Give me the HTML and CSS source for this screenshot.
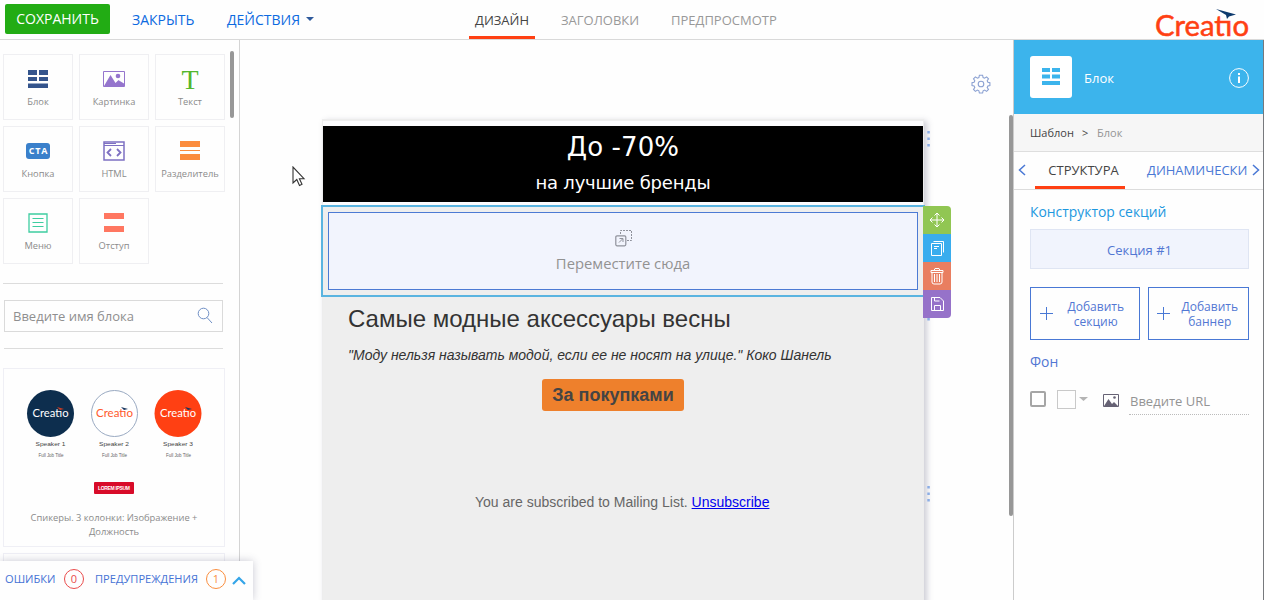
FILE: index.html
```html
<!DOCTYPE html>
<html lang="ru">
<head>
<meta charset="utf-8">
<title>Creatio</title>
<link rel="stylesheet" href="styles.css">
</head>
<body>
<div class="app">
  <header class="topbar">
    <button class="save"><span class="w83">СОХРАНИТЬ</span></button>
    <a class="action close">ЗАКРЫТЬ</a>
    <a class="action more">ДЕЙСТВИЯ</a>
    <svg class="caret" width="8" height="4"><path d="M0 0h8L4 4z" fill="#2f5a9c"/></svg>
    <nav class="modes">
      <a class="mode active">ДИЗАЙН</a>
      <a class="mode headings">ЗАГОЛОВКИ</a>
      <a class="mode preview">ПРЕДПРОСМОТР</a>
    </nav>
    <svg class="logo" width="96" height="32" viewBox="0 0 96 32">
      <text x="0" y="28" textLength="94" lengthAdjust="spacingAndGlyphs" class="logo-text">Creatıo</text>
      <path d="M61 1l20 5.500-7 2-2 2.500-1-4z" fill="#0d3a6e"/>
    </svg>
  </header>
  <div class="body">
    <aside class="palette">
      <div class="tiles">
        <div class="tile"><svg class="lower" width="20" height="18" fill="#34548c"><path d="M0 0h9v5H0zM11 0h9v5h-9zM0 7h9v4H0zM11 7h9v4h-9zM0 13.500h20V18H0z"/></svg><span>Блок</span></div>
        <div class="tile"><svg class="lower" width="22" height="18" fill="none"><path d="M.5 1.500h21v15H.5z" stroke="#9575cd"/><path d="M1 16L7.500 5l5 8 3-3 5 6z" fill="#9575cd"/><circle cx="15" cy="6" r="2.300" fill="#9575cd"/><path d="M16 10.500l5 3V16h-4z" fill="#9575cd"/></svg><span>Картинка</span></div>
        <div class="tile"><b class="letter">T</b><span>Текст</span></div>
        <div class="tile"><i class="cta">CTA</i><span>Кнопка</span></div>
        <div class="tile"><svg width="22" height="20" fill="none" stroke="#7e70c2"><path d="M1 1h20v18H1z" stroke-width="1.500"/><path d="M1 4.500h20M1 2.500h12" stroke-width="1.200"/><path d="M8 8l-3.500 3.500L8 15M14 8l3.500 3.500L14 15" stroke-width="1.800"/></svg><span>HTML</span></div>
        <div class="tile"><svg width="20" height="20" fill="#fb8c3e"><path d="M0 0h20v6H0zM0 9h20v1H0zM0 13h20v6H0z"/></svg><span>Разделитель</span></div>
        <div class="tile"><svg width="20" height="20" fill="none" stroke="#3ecda0"><path d="M1 1h18v18H1z" stroke-width="1.300"/><path d="M4.500 5.500h11M4.500 9.500h11M4.500 13.500h11"/></svg><span>Меню</span></div>
        <div class="tile"><svg width="20" height="20" fill="#ff7761"><path d="M0 0h20v6H0zM0 13h20v6H0z"/></svg><span>Отступ</span></div>
      </div>
      <div class="scroll-thumb"></div>
      <div class="search"><span>Введите имя блока</span>
        <svg width="16" height="17" fill="none" stroke="#6f8fc5"><circle cx="6.500" cy="6.500" r="5.300"/><path d="M10 10.500l5 5.500"/></svg>
      </div>
      <div class="block-card">
        <svg width="180" height="110" viewBox="0 0 180 110">
          <circle cx="27.500" cy="24.500" r="23.500" fill="#0d2e4e"/>
          <circle cx="91.500" cy="24.500" r="23" fill="#fff" stroke="#9aaac2"/>
          <circle cx="155" cy="24.500" r="23.500" fill="#ff4013"/>
          <g class="mini-logo">
            <text x="9.500" y="28" textLength="36" lengthAdjust="spacingAndGlyphs" fill="#fff">Creatıo</text>
            <text x="73" y="28" textLength="37" lengthAdjust="spacingAndGlyphs" fill="#ff5a2c">Creatıo</text>
            <text x="137" y="28" textLength="36" lengthAdjust="spacingAndGlyphs" fill="#fff">Creatıo</text>
          </g>
          <path d="M34 18l7 2-4 1z" fill="#cf3c21"/><path d="M98 18l7 2-4 1zM162 18l7 2-4 1z" fill="#17355d"/>
          <g class="name"><text x="12.500" y="57" textLength="30" lengthAdjust="spacingAndGlyphs">Speaker 1</text><text x="76" y="57" textLength="30" lengthAdjust="spacingAndGlyphs">Speaker 2</text><text x="140" y="57" textLength="30" lengthAdjust="spacingAndGlyphs">Speaker 3</text></g>
          <g class="job"><text x="15.500" y="67.500" textLength="25">Full Job Title</text><text x="79" y="67.500" textLength="25">Full Job Title</text><text x="143" y="67.500" textLength="25">Full Job Title</text></g>
          <rect x="71" y="93" width="40" height="12" rx="1" fill="#d80b29"/>
          <text x="75" y="101" textLength="32" class="lorem">LOREM IPSUM</text>
        </svg>
        <p>Спикеры. 3 колонки: Изображение +<br>Должность</p>
      </div>
      <div class="next-card"></div>
    </aside>

    <main class="stage">
      <svg class="gear" width="20" height="20" viewBox="0 0 20 20" fill="none" stroke="#8ba1d2" stroke-width="1.100"><circle cx="10" cy="10" r="2.800"/><path d="M8.400 1.200h3.200l.5 2.300 1.500.7 2-1.300 1.900 1.900-1.300 2 .7 1.500 2 .5v2.700l-2 .5-.7 1.500 1.300 2-1.900 1.900-2-1.300-1.500.7-.5 2.200H8.400l-.5-2.200-1.500-.7-2 1.300-1.900-1.900 1.300-2-.7-1.500-2.100-.5V8.800l2.100-.5.7-1.500-1.300-2 1.900-1.900 2 1.300 1.500-.7z"/></svg>
      <div class="stage-thumb"></div>
      <article class="email">
        <div class="banner"><div class="big">До -70%</div><div class="small">на лучшие бренды</div></div>
        <div class="selected">
          <div class="drop">
            <svg width="17" height="17" fill="none" stroke="#8f919b"><path d="M5.500 4V.5h11v10H12" stroke-dasharray="2 1"/><rect x=".8" y="5.800" width="10" height="10" rx="1.200" stroke-width="1.200"/><path d="M4 12.500L7.500 9M4.500 8.500h3.500V12" /></svg>
            <span>Переместите сюда</span>
          </div>
          <div class="tools">
            <div class="tool move"><svg width="16" height="16"><path d="M8 1v14M1 8h14M5.500 3.500L8 1l2.500 2.500M5.500 12.500L8 15l2.500-2.500M3.500 5.500L1 8l2.500 2.500M12.500 5.500L15 8l-2.500 2.500"/></svg></div>
            <div class="tool copy"><svg width="16" height="16"><path d="M2.500 3.500h10v12h-10zM4.500 1.500h10v11M5 6.500h5M5 8.500h3"/></svg></div>
            <div class="tool trash"><svg width="16" height="17"><path d="M5 2.500l1-2h4l1 2M2 2.500h12v2H2zM3 4.500V14q0 2 2 2h6q2 0 2-2V4.500M5.500 6v8M8 6v8M10.500 6v8"/></svg></div>
            <div class="tool store"><svg width="16" height="16"><path d="M2.500 1.500h8.500l3.500 3.500v9.500h-12zM5.500 1.500v3.500h5M5.500 14.500v-5h6v5"/></svg></div>
          </div>
        </div>
        <h1>Самые модные аксессуары весны</h1>
        <p class="quote">"Моду нельзя называть модой, если ее не носят на улице." Коко Шанель</p>
        <div class="shop">За покупками</div>
        <p class="mailing"><span>You are subscribed to Mailing List.</span> <a>Unsubscribe</a></p>
      </article>
      <svg class="dots first" width="3" height="16"><path d="M.3 0h2.500v2.500H.3zM.3 6.500h2.500V9H.3zM.3 13h2.500v2.500H.3z"/></svg>
      <svg class="dots middle" width="3" height="3"><path d="M.3 0h2.500v2.500H.3z"/></svg>
      <svg class="dots last" width="3" height="16"><path d="M.3 0h2.500v2.500H.3zM.3 6.500h2.500V9H.3zM.3 13h2.500v2.500H.3z"/></svg>
      <svg class="pointer" width="14" height="21"><path d="M1 1v16l3.800-3.500 2.700 6 2.500-1.200-2.600-5.600H12z" fill="#fff" stroke="#333" stroke-width="1.100"/></svg>
    </main>

    <aside class="props">
      <div class="props-head">
        <div class="props-icon"><svg width="18" height="17" fill="#3cb4ec"><path d="M0 0h8v4H0zM10 0h8v4h-8zM0 6.500h8v4H0zM10 6.500h8v4h-8zM0 13h18v4H0z"/></svg></div>
        <span>Блок</span>
        <svg class="info" width="20" height="20" fill="none" stroke="#fff"><circle cx="10" cy="10" r="9.400"/><path d="M10 8.500V15M10 5v2" stroke-width="2"/></svg>
      </div>
      <div class="crumbs"><span class="c1">Шаблон</span><span class="c2">&gt;</span><span class="c3">Блок</span></div>
      <div class="tabs">
        <svg class="prev" width="8" height="12"><path d="M7 1L1.500 6 7 11"/></svg>
        <a class="tab current">СТРУКТУРА</a>
        <a class="tab dynamic">ДИНАМИЧЕСКИ</a>
        <svg class="next" width="8" height="12"><path d="M1 1l5.500 5L1 11"/></svg>
      </div>
      <div class="form">
        <h2>Конструктор секций</h2>
        <div class="section">Секция #1</div>
        <div class="adds">
          <div class="add wide"><svg width="13" height="13"><path d="M6.500 0v13M0 6.500h13"/></svg><span>Добавить<br>секцию</span></div>
          <div class="add"><svg width="13" height="13"><path d="M6.500 0v13M0 6.500h13"/></svg><span>Добавить<br>баннер</span></div>
        </div>
        <h3>Фон</h3>
        <div class="background">
          <i class="check"></i><i class="swatch"></i>
          <svg class="drop-caret" width="9" height="4"><path d="M0 0h9L4.500 4z" fill="#b4b4b4"/></svg>
          <svg class="pic" width="16" height="13" fill="none"><path d="M.5.500h15v12H.5z" stroke="#666274"/><path d="M1 12l4.500-7L9 10l2-2 4 4z" fill="#666274"/><circle cx="11.500" cy="3.500" r="1.300" fill="#666274"/></svg>
          <span class="url">Введите URL</span>
        </div>
      </div>
    </aside>
  </div>
  <footer class="status">
    <span class="errors">ОШИБКИ</span><i class="count red">0</i>
    <span class="warnings">ПРЕДУПРЕЖДЕНИЯ</span><i class="count orange">1</i>
    <svg width="14" height="9" fill="none" stroke="#35a5e8" stroke-width="2.200"><path d="M1 8l6-6 6 6"/></svg>
  </footer>
</div>
</body>
</html>
```
FILE: styles.css
```css
* { box-sizing: border-box; }
body { margin: 0; font-family: "Open Sans", sans-serif; background: #fefefe; }
p, h1, h2, h3 { margin: 0; font-weight: 400; }
i { font-style: normal; }
svg { flex: none; }
.app { position: relative; width: 1264px; height: 600px; overflow: hidden; display: flex; flex-direction: column; white-space: nowrap; }

.topbar { height: 40px; flex: none; display: flex; border-bottom: 1px solid #d9d9d9; font-size: 14px; line-height: 39px; }
.save { width: 105px; height: 30px; margin: 4px 0 0 5px; padding: 0; border: 0; border-radius: 2px; background: #22ac14; color: #fff; font: 14px/30px "Open Sans", sans-serif; }
.action { color: #0d6ae0; }
.close { width: 62px; margin-left: 22px; }
.more { width: 74px; margin-left: 33px; }
.caret { margin: 17px 0 0 5px; }
.modes { display: flex; margin-left: 155px; font-size: 13px; line-height: 40px; color: #999; }
.mode { height: 39px; }
.mode.active { width: 66px; text-align: center; color: #444; border-bottom: 3px solid #ff4013; }
.headings { width: 79px; margin-left: 26px; }
.preview { width: 106px; margin-left: 31px; }
.logo { margin: 8px 13px 0 auto; overflow: visible; }
.logo-text { font: 28px Lato, sans-serif; fill: #ff4013; stroke: #ff4013; stroke-width: .5px; }

.body { display: flex; flex: 1; min-height: 0; }
.palette { position: relative; width: 240px; flex: none; border-right: 1px solid #d4d4d4; padding: 14px 14px 0 3px; overflow: hidden; }
.tiles { display: grid; grid-template-columns: repeat(3, 70px); grid-auto-rows: 66px; gap: 6px; height: 230px; border-bottom: 1px solid #dcdcdc; width: 220px; }
.tile { border: 1px solid #efeff2; display: flex; flex-direction: column; align-items: center; padding-top: 14px; color: #8b8b8b; font-size: 9.3px; line-height: 14px; }
.tile span { margin-top: auto; margin-bottom: 10px; }
.lower { margin-top: 1px; }
.letter { font: 28px/22px "Liberation Serif", serif; color: #54b62d; }
.cta { width: 24px; height: 16px; margin-top: 2px; border-radius: 3px; background: #3a80cb; color: #fff; font-size: 9px; font-weight: 700; line-height: 16px; letter-spacing: .8px; text-align: center; padding-left: 1px; }
.scroll-thumb { position: absolute; left: 230px; top: 11px; width: 4px; height: 67px; border-radius: 2px; background: #979797; }
.search { width: 219px; height: 32px; margin: 16px 0 0 1px; border: 1px solid #dadada; display: flex; align-items: center; justify-content: space-between; padding: 0 9px 1px 8px; color: #8f8f8f; font-size: 13px; }
.block-card { position: relative; width: 222px; height: 179px; margin-top: 36px; border: 1px solid #efeff5; text-align: center; padding: 20px 0 0 0; color: #8b8b8b; font-size: 9.35px; line-height: 14px; }
.block-card::before { content: ""; position: absolute; left: 0; right: 1px; top: -21px; border-top: 1px solid #dcdcdc; }
.block-card svg { display: block; margin-left: 19px; }
.block-card p { margin-top: 12px; }
.mini-logo { font: 10.5px Lato, sans-serif; }
.name { font: 5.5px "Liberation Sans", sans-serif; fill: #444; }
.job { font: 4.5px "Liberation Sans", sans-serif; fill: #666; }
.lorem { font: bold 5px "Liberation Sans", sans-serif; fill: #fff; }
.next-card { width: 222px; height: 60px; margin-top: 6px; border: 1px solid #efeff5; }

.stage { position: relative; flex: 1; overflow: hidden; padding: 79px 0 0 82px; }
.gear { position: absolute; left: 731px; top: 34px; }
.stage-thumb { position: absolute; right: 0; top: 75px; width: 4px; height: 401px; border-radius: 2px; background: #979797; }
.email { width: 602px; height: 520px; border: 1px solid #ededed; border-width: 2px 1px 0; background: #eee; box-shadow: 3px 2px 6px rgba(60,60,90,.25); }
.banner { height: 84px; border: solid #fbfbfd; border-width: 5px 0 3px; background: #000; color: #fff; text-align: center; font-family: "DejaVu Sans", sans-serif; }
.big { font-size: 26px; line-height: 42px; letter-spacing: .1px; }
.small { font-size: 18px; line-height: 29px; letter-spacing: -.2px; }
.selected { position: relative; width: 604px; height: 92px; margin-left: -2px; border: 2px solid #5ab4e0; padding: 5px; background: #eee; }
.drop { width: 590px; height: 78px; border: 1px solid #4c7ad4; background: #f2f4fd; display: flex; flex-direction: column; align-items: center; color: #929292; font-size: 14.8px; line-height: 20px; padding-top: 17px; }
.drop span { margin-top: 6px; }
.tools { position: absolute; left: 600px; top: -1px; width: 28px; border-radius: 0 4px 4px 0; overflow: hidden; z-index: 2; }
.tool { height: 28px; display: flex; align-items: center; justify-content: center; }
.tool svg { fill: none; stroke: #fff; }
.move { background: #91c653; } .copy { background: #39adee; } .trash { background: #e97e60; } .store { background: #9672c9; }
.email h1 { font: 24px/28px "Liberation Sans", sans-serif; color: #333; padding: 8px 0 0 25px; }
.quote { font: italic 14px/20px "Liberation Sans", sans-serif; color: #333; padding: 12px 0 0 25px; }
.shop { width: 142px; height: 32px; margin: 14px 0 0 219px; border-radius: 3px; background: #ee802c; color: #444; font: bold 18px/32px "Liberation Sans", sans-serif; text-align: center; }
.mailing { font: 14px/20px "Liberation Sans", sans-serif; color: #666; padding-top: 81px; margin-left: 152px; }
.mailing a { color: #00e; text-decoration: underline; }
.dots { position: absolute; left: 687px; fill: #8badE5; z-index: 1; }
.first { top: 91px; } .middle { top: 278px; } .last { top: 446px; }
.pointer { position: absolute; left: 52px; top: 126px; }

.props { width: 251px; flex: none; border-left: 1px solid #ccc; border-right: 1px solid #77797d; }
.props-head { height: 74px; background: #3cb4ec; display: flex; align-items: center; padding: 0 14px 0 16px; color: #fff; font-size: 13px; font-weight: 500; line-height: 20px; }
.props-head span { padding-top: 2px; }
.props-icon { width: 42px; height: 42px; border-radius: 3px; background: #fff; margin: 0 12px 0 0; padding-bottom: 2px; display: flex; align-items: center; justify-content: center; }
.info { margin: 2px 0 0 auto; }
.crumbs { height: 38px; border-bottom: 1px solid #dedede; background: #f6f6f6; padding-left: 16px; display: flex; font-size: 11px; line-height: 38px; color: #444; }
.c1 { width: 52px; } .c2 { width: 15px; } .c3 { color: #959595; }
.tabs { height: 38px; border-bottom: 1px solid #dcdcdc; display: flex; font-size: 13px; line-height: 37px; color: #4978d5; }
.tabs svg { fill: none; stroke: #4978d5; stroke-width: 1.5; margin-top: 12px; }
.prev { margin-left: 4px; }
.tab { height: 37px; }
.current { width: 90px; margin-left: 9px; text-align: center; color: #444; border-bottom: 3px solid #ff4013; padding-left: 7px; }
.dynamic { width: 101px; margin-left: 22px; }
.next { margin-left: 4px; }
.form { padding: 12px 14px 0 16px; color: #5277d3; }
.form h2 { font-size: 13.9px; line-height: 20px; color: #1c98df; }
.section { height: 40px; margin-top: 7px; border: 1px solid #dfe5f3; background: #f1f4fd; text-align: center; font-size: 13px; line-height: 40px; }
.adds { display: flex; gap: 8px; margin-top: 18px; }
.add { width: 101px; height: 53px; border: 1px solid #4978d5; display: flex; align-items: center; justify-content: space-between; padding: 0 10px 0 8px; font-size: 12px; line-height: 15px; text-align: center; }
.add.wide { width: 110px; padding: 0 15px 0 9px; }
.add svg { stroke: #4978d5; }
.form h3 { font-size: 13.9px; line-height: 20px; margin-top: 12px; }
.background { display: flex; align-items: flex-start; height: 27px; margin-top: 16px; }
.check { width: 16px; height: 16px; margin-top: 3px; border: 2px solid #a5a5a5; border-radius: 2px; }
.swatch { width: 19px; height: 19px; margin: 2px 0 0 11px; border: 1px solid #c9c9c9; }
.drop-caret { margin: 9px 0 0 3px; }
.pic { margin: 6px 0 0 15px; }
.url { width: 120px; height: 27px; margin-left: 10px; padding-left: 1px; border-bottom: 1px dotted #bbb; color: #949494; font-size: 13px; line-height: 26px; }

.status { position: absolute; left: 0; top: 561px; width: 253px; height: 39px; background: #fefefe; box-shadow: 0 0 8px rgba(80,80,110,.3); display: flex; align-items: center; padding: 0 0 3px 5px; color: #4673d5; font-size: 11.1px; line-height: 20px; z-index: 3; }
.errors { width: 51px; } .warnings { width: 103px; margin-left: 11px; }
.count { width: 20px; height: 20px; border: 1px solid; border-radius: 50%; text-align: center; line-height: 18px; font-size: 11px; }
.red { color: #ea4c4c; margin-left: 8px; } .orange { color: #fa8e3e; margin-left: 8px; }
.status > svg { margin: 3px 0 0 6px; }
```
